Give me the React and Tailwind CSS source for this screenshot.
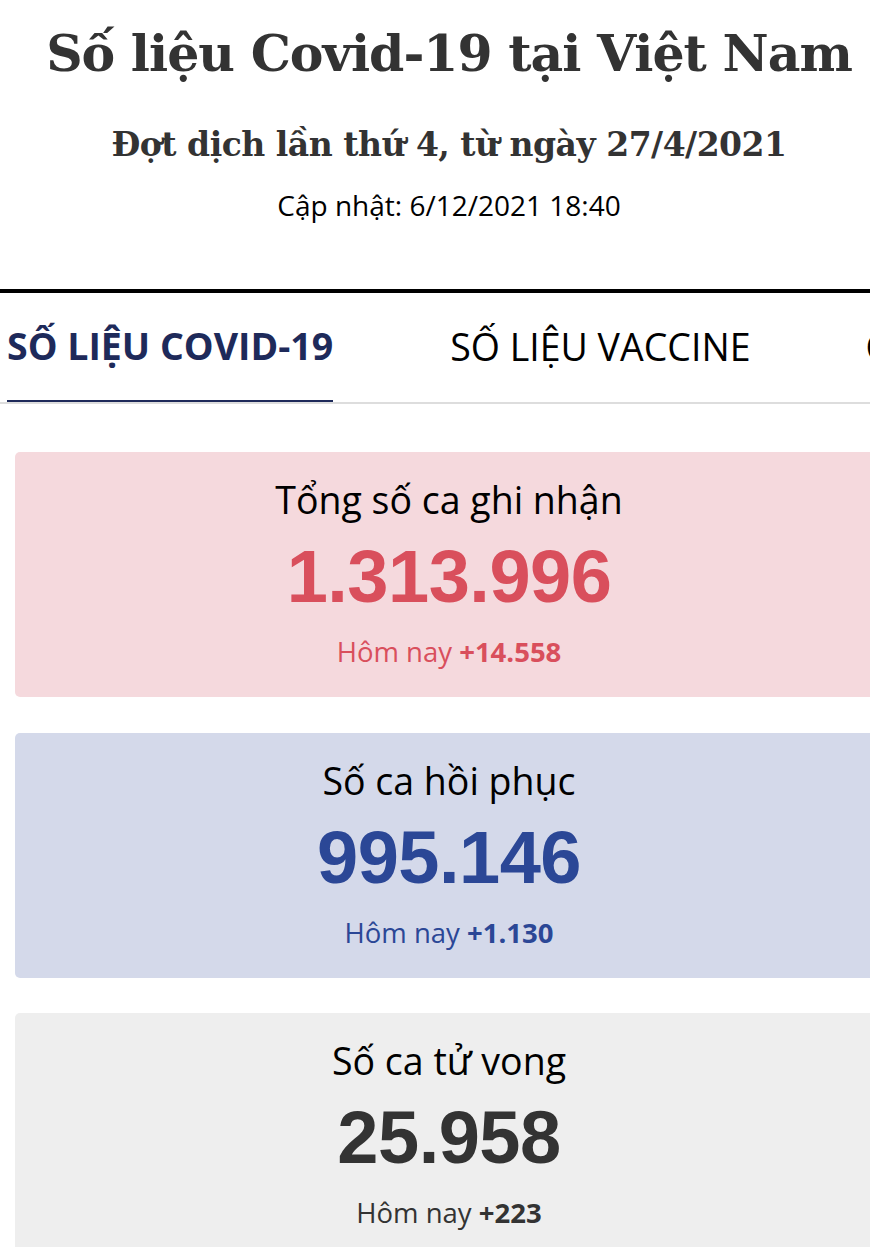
const stats = [
  {
    label: 'Tổng số ca ghi nhận',
    value: '1.313.996',
    today: '+14.558',
    bg: 'bg-[#f5d9dd]',
    color: 'text-[#d94f5c]',
  },
  {
    label: 'Số ca hồi phục',
    value: '995.146',
    today: '+1.130',
    bg: 'bg-[#d4d9ea]',
    color: 'text-[#2b4796]',
  },
  {
    label: 'Số ca tử vong',
    value: '25.958',
    today: '+223',
    bg: 'bg-[#eeeeee]',
    color: 'text-[#333333]',
  },
];

const StatCard = ({ stat }) => (
  <div className={`${stat.bg} rounded-[5px] h-[245px] flex flex-col items-center pt-[22px]`}>
    <p className="font-['Open_Sans'] text-[37.5px] leading-[52px] text-black">{stat.label}</p>
    <p className={`font-['Liberation_Sans'] font-bold text-[74px] leading-[84px] mt-[9px] tracking-[-0.5px] ${stat.color}`}>
      {stat.value}
    </p>
    <p className={`font-['Open_Sans'] text-[27.5px] leading-[38px] mt-[14px] ${stat.color}`}>
      Hôm nay <span className="font-bold">{stat.today}</span>
    </p>
  </div>
);

const App = () => {
  return (
    <div className="w-[870px] h-[1247px] overflow-hidden bg-white">
      <div className="w-[898px]">
        {/* Header */}
        <div className="flex flex-col items-center text-[#333333] font-['DejaVu_Serif',serif]">
          <h1 className="font-bold text-[50.5px] leading-[64px] mt-[22px] tracking-[-1px]">
            Số liệu Covid-19 tại Việt Nam
          </h1>
          <h2 className="font-bold text-[33px] leading-[44px] mt-[37px] tracking-[-0.5px]">
            Đợt dịch lần thứ 4, từ ngày 27/4/2021
          </h2>
          <p className="font-['Open_Sans',sans-serif] text-[28px] leading-[38px] mt-[19px] text-black">
            Cập nhật: 6/12/2021 18:40
          </p>
        </div>

        {/* Tabs */}
        <div className="mt-[65px] border-t-[4px] border-black">
          <div className="flex border-b-[2px] border-[#dddddd] h-[111px] font-['Open_Sans',sans-serif] text-[37.5px] whitespace-nowrap">
            <div className="ml-[7px] h-full flex items-center border-b-[2px] border-[#1e2a5a] font-bold text-[#1e2a5a]">
              SỐ LIỆU COVID-19
            </div>
            <div className="ml-[117px] h-full flex items-center text-black">SỐ LIỆU VACCINE</div>
            <div className="ml-[115px] h-full flex items-center text-black">CA BỆNH</div>
          </div>
        </div>

        {/* Cards */}
        <div className="ml-[15px] mr-[15px] mt-[48px] flex flex-col gap-[35.5px]">
          {stats.map((s, i) => (
            <StatCard key={i} stat={s} />
          ))}
        </div>
      </div>
    </div>
  );
};

export default App;
